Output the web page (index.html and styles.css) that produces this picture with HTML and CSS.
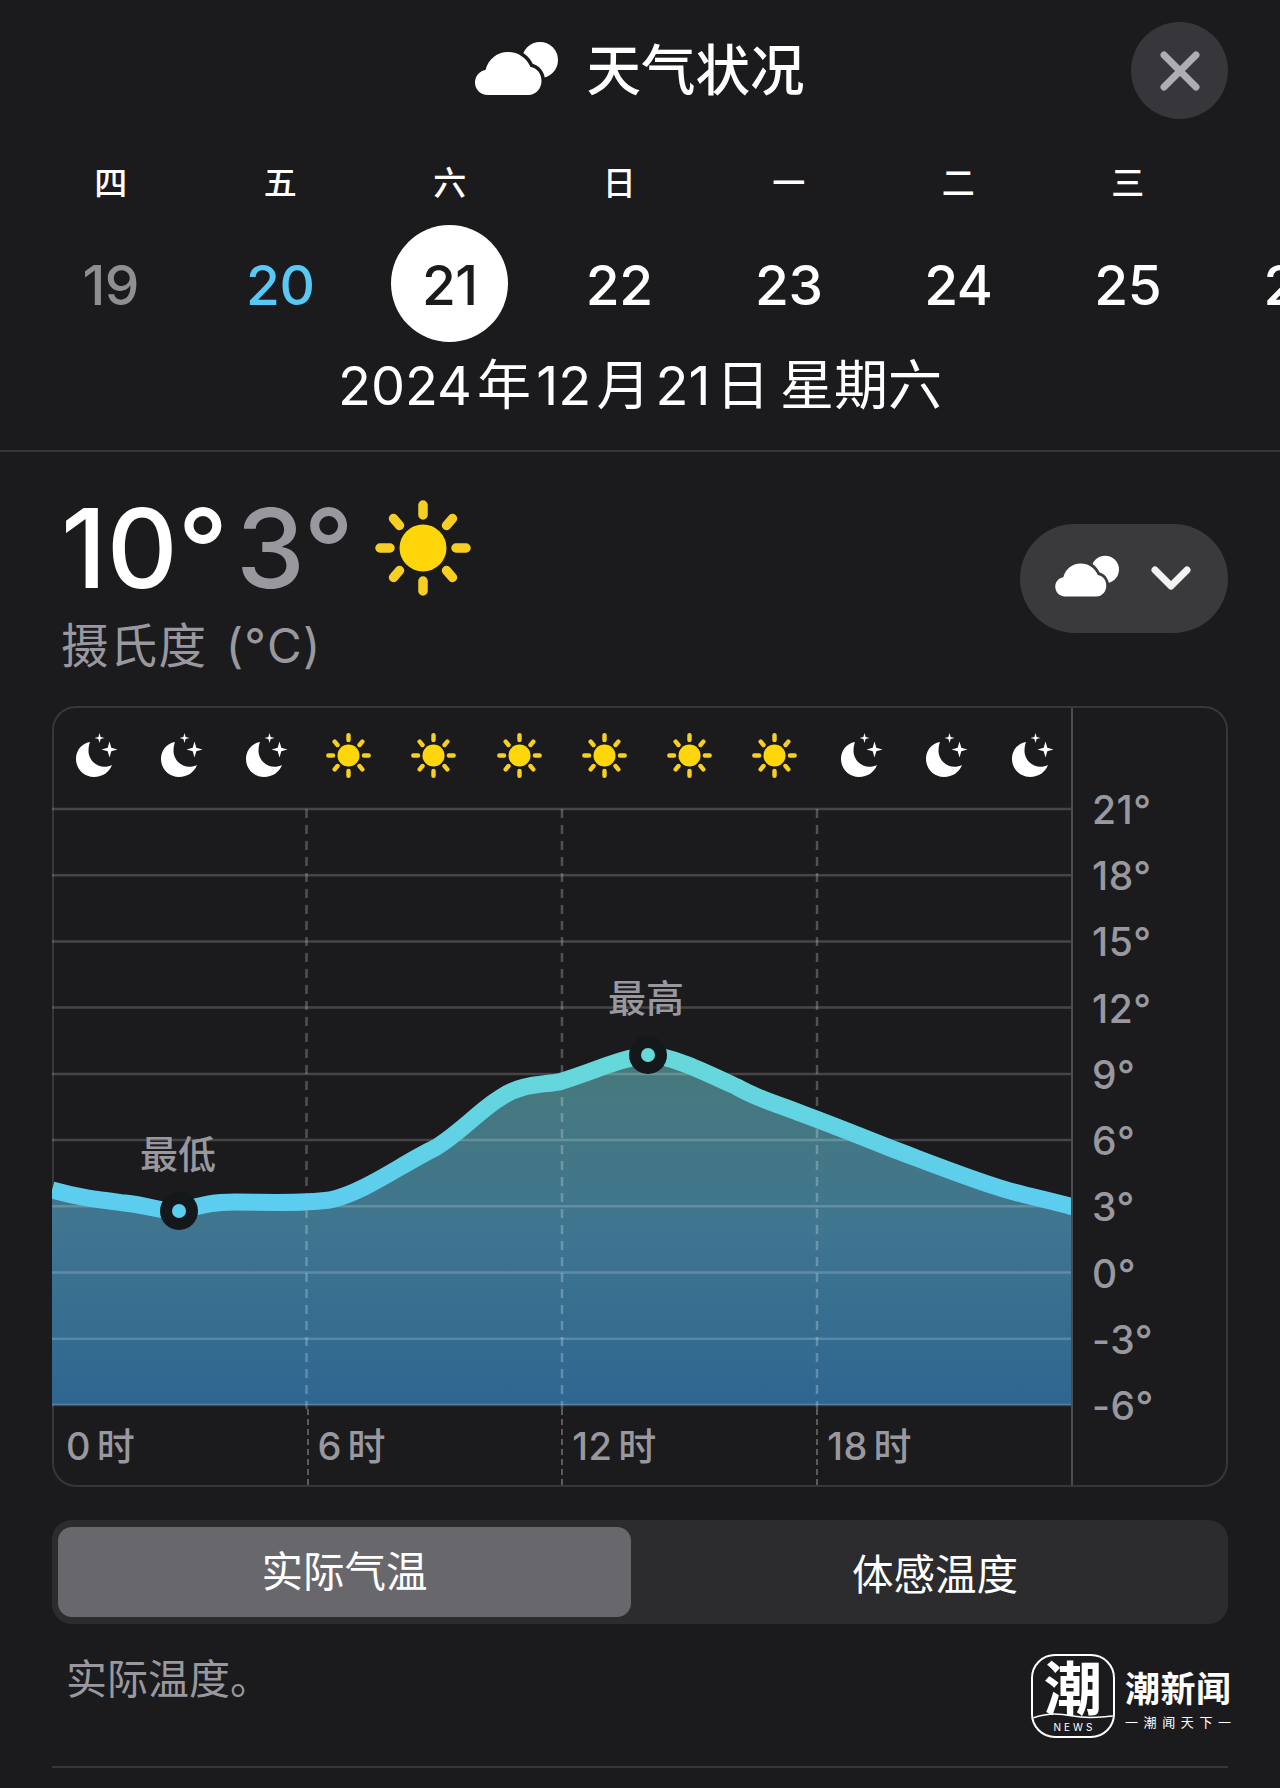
FILE: index.html
```html
<!DOCTYPE html>
<html lang="zh-CN">
<head>
<meta charset="utf-8">
<title>天气状况</title>
<link rel="stylesheet" href="styles.css">
</head>
<body>
<svg class="defs" aria-hidden="true">
  <defs>
    <mask id="cloud-gap" maskUnits="userSpaceOnUse" x="0" y="0" width="84" height="56">
      <rect width="84" height="56" fill="#fff"/>
      <path fill="#000" stroke="#000" stroke-width="7" d="M13 54C5 54 0 48 0 41.500c0-6.500 4.500-11.500 10.500-12.500C13.500 18 22 11 33 11c10.500 0 18.500 6 22.500 15 6.500 1 11 6.500 11 14 0 7.500-5.500 14-13 14Z"/>
    </mask>
    <symbol id="cloud" viewBox="0 0 84 56">
      <circle cx="65" cy="19" r="18" fill="currentColor" mask="url(#cloud-gap)"/>
      <path fill="currentColor" d="M13 54C5 54 0 48 0 41.500c0-6.500 4.500-11.500 10.500-12.500C13.500 18 22 11 33 11c10.500 0 18.500 6 22.500 15 6.500 1 11 6.500 11 14 0 7.500-5.500 14-13 14Z"/>
    </symbol>
    <symbol id="sun" viewBox="0 0 96 96">
      <circle cx="48" cy="48" r="23.500" fill="#ffd60a"/>
      <g stroke="#f7cf23" stroke-width="9.500" stroke-linecap="round">
        <path d="M48 5V15M48 81V91M5 48H15M81 48H91M18.500 18.500L24.500 25.500M71.500 70.500L77.500 77.500M77.500 18.500L71.500 25.500M24.500 70.500L18.500 77.500"/>
      </g>
    </symbol>
    <symbol id="moon" viewBox="0 0 42 44">
      <path fill="#fff" d="M14 9C5 10.500 0 18 0 26c0 10 8 18 18 18 8.500 0 15.500-5 18-12-2 1.200-5 1.800-7.500 1.800C19.500 33.800 12.500 26 12.500 18c0-3.500.5-6.500 1.500-9Z"/>
      <path fill="#fff" d="M33.500 8.500l1.800 6.200 6.200 1.800-6.200 1.800-1.800 6.200-1.800-6.200-6.200-1.800 6.200-1.800ZM23.500 0l1.100 3.900 3.900 1.100-3.900 1.100-1.100 3.900-1.100-3.900-3.900-1.100 3.900-1.100Z"/>
    </symbol>
  </defs>
</svg>

<header class="head">
  <div class="title-row">
    <span></span>
    <h1 class="title">
      <svg class="title-icon"><use href="#cloud"/></svg>
      <span>天气状况</span>
    </h1>
    <button class="close" aria-label="关闭">
      <svg class="close-icon" viewBox="0 0 40 40"><path d="M4 4L36 36M36 4L4 36"/></svg>
    </button>
  </div>
  <div class="week weekdays">
    <span>四</span><span>五</span><span>六</span><span>日</span><span>一</span><span>二</span><span>三</span>
  </div>
  <div class="week days">
    <span class="past">19</span>
    <span class="today">20</span>
    <span class="selected">21</span>
    <span>22</span><span>23</span><span>24</span><span>25</span><span>26</span>
  </div>
  <p class="date">2024 年 12 月 21 日&nbsp; 星期六</p>
</header>

<main class="main">
  <section class="summary">
    <div>
      <div class="temps">
        <span class="temp-high">10°</span>
        <span class="temp-low">3°</span>
        <svg class="temp-sun"><use href="#sun"/></svg>
      </div>
      <div class="unit">摄氏度 (°C)</div>
    </div>
    <button class="picker" aria-label="选择">
      <svg class="picker-cloud"><use href="#cloud"/></svg>
      <svg class="picker-chevron" viewBox="0 0 40 24"><path d="M4 4L20 20L36 4"/></svg>
    </button>
  </section>

  <section class="chart">
    <div class="plot">
      <div class="hour-icons">
        <svg class="moon"><use href="#moon"/></svg>
        <svg class="moon"><use href="#moon"/></svg>
        <svg class="moon"><use href="#moon"/></svg>
        <svg class="sun"><use href="#sun"/></svg>
        <svg class="sun"><use href="#sun"/></svg>
        <svg class="sun"><use href="#sun"/></svg>
        <svg class="sun"><use href="#sun"/></svg>
        <svg class="sun"><use href="#sun"/></svg>
        <svg class="sun"><use href="#sun"/></svg>
        <svg class="moon"><use href="#moon"/></svg>
        <svg class="moon"><use href="#moon"/></svg>
        <svg class="moon"><use href="#moon"/></svg>
      </div>
      <svg class="graph" viewBox="52 805 1019 604">
        <defs>
          <linearGradient id="area" gradientUnits="userSpaceOnUse" x1="0" y1="1060" x2="0" y2="1405">
            <stop offset="0" stop-color="#47797b"/>
            <stop offset="0.5" stop-color="#3f7590"/>
            <stop offset="1" stop-color="#2e6691"/>
          </linearGradient>
          <linearGradient id="stroke" gradientUnits="userSpaceOnUse" x1="0" y1="1055" x2="0" y2="1200">
            <stop offset="0" stop-color="#67d8d8"/>
            <stop offset="1" stop-color="#5ccdef"/>
          </linearGradient>
        </defs>
        <path class="area" d="M52 1190C80 1198 100 1200 125 1203C150 1206 165 1212 179 1211C195 1208 205 1202 235 1202C265 1202 300 1204 330 1200C365 1192 400 1165 435 1148C460 1133 480 1110 500 1098C520 1084 540 1085 559 1082C590 1073 620 1058 648 1055C670 1055 705 1072 737 1087C760 1100 775 1103 800 1113C830 1124 860 1136 890 1148C930 1163 960 1175 994 1186C1020 1195 1045 1199 1073 1207L1073 1405L52 1405Z"/>
        <g class="grid-lines">
          <path d="M52 809H1071M52 875.200H1071M52 941.400H1071M52 1007.600H1071M52 1073.900H1071M52 1140.100H1071M52 1206.300H1071M52 1272.500H1071M52 1338.800H1071M52 1405H1071"/>
        </g>
        <path class="dash-lines" d="M306.500 809V1409M562 809V1409M817 809V1409"/>
        <path class="curve" d="M52 1190C80 1198 100 1200 125 1203C150 1206 165 1212 179 1211C195 1208 205 1202 235 1202C265 1202 300 1204 330 1200C365 1192 400 1165 435 1148C460 1133 480 1110 500 1098C520 1084 540 1085 559 1082C590 1073 620 1058 648 1055C670 1055 705 1072 737 1087C760 1100 775 1103 800 1113C830 1124 860 1136 890 1148C930 1163 960 1175 994 1186C1020 1195 1045 1199 1073 1207"/>
        <circle class="ring" cx="179" cy="1211" r="19"/>
        <circle class="dot" cx="179" cy="1211" r="7"/>
        <circle class="ring" cx="648" cy="1055" r="19"/>
        <circle class="dot dot-high" cx="648" cy="1055" r="7"/>
        <text class="graph-label" x="178" y="1168">最低</text>
        <text class="graph-label" x="646" y="1012">最高</text>
      </svg>
      <div class="hours">
        <span>0 时</span><span>6 时</span><span>12 时</span><span>18 时</span>
      </div>
    </div>
    <div class="axis">
      <span>21°</span><span>18°</span><span>15°</span><span>12°</span><span>9°</span>
      <span>6°</span><span>3°</span><span>0°</span><span>-3°</span><span>-6°</span>
    </div>
  </section>

  <div class="segment">
    <span class="segment-on">实际气温</span>
    <span class="segment-off">体感温度</span>
  </div>

  <footer class="foot">
    <p class="foot-text">实际温度。</p>
    <div class="brand">
      <div class="brand-mark">
        <span class="brand-glyph">潮</span>
        <svg class="brand-wave" viewBox="0 0 80 6" preserveAspectRatio="none"><path d="M0 5C14 0 24 0 40 3C56 6 66 4 80 3"/></svg>
        <span class="brand-news">NEWS</span>
      </div>
      <div class="brand-text">
        <span class="brand-name">潮新闻</span>
        <span class="brand-slogan"><i>一</i><i>潮</i><i>闻</i><i>天</i><i>下</i><i>一</i></span>
      </div>
    </div>
  </footer>
</main>
</body>
</html>
```

FILE: styles.css
```css
* { box-sizing: border-box; }

html, body {
  margin: 0;
  padding: 0;
  background: #1b1b1e;
}

body {
  width: 1280px;
  height: 1788px;
  overflow: hidden;
  color: #fff;
  font-family: Inter, "Noto Sans CJK SC", sans-serif;
}

.defs { display: block; width: 0; height: 0; }

button {
  border: 0;
  padding: 0;
  color: inherit;
  font: inherit;
}

/* header */
.head {
  padding-top: 22px;
  height: 452px;
  border-bottom: 2px solid #37373a;
}

.title-row {
  display: grid;
  grid-template-columns: 1fr auto 1fr;
  align-items: center;
  height: 97px;
  padding: 0 52px;
}

.title {
  display: flex;
  align-items: center;
  gap: 27px;
  margin: 0;
  font-size: 54.500px;
  font-weight: 500;
  line-height: 97px;
}

.title-icon { width: 84px; height: 56px; color: #fff; margin-top: -4px; }

.close {
  justify-self: end;
  display: flex;
  align-items: center;
  justify-content: center;
  width: 97px;
  height: 97px;
  border-radius: 50%;
  background: #37373b;
}

.close-icon {
  width: 40px;
  height: 40px;
  fill: none;
  stroke: #aeaeb2;
  stroke-width: 7;
  stroke-linecap: round;
}

.week {
  display: grid;
  grid-template-columns: repeat(8, 169.5px);
  padding-left: 26px;
  text-align: center;
  white-space: nowrap;
}

.weekdays {
  margin-top: 44px;
  height: 40px;
  font-size: 33px;
  font-weight: 500;
  line-height: 40px;
}

.days {
  margin-top: 22px;
  height: 117px;
  font-size: 55px;
  font-weight: 500;
  line-height: 120px;
  letter-spacing: -0.5px;
}

.days span { display: block; }
.days .past { color: #8e8e93; }
.days .today { color: #5ac8f5; }
.days .selected {
  justify-self: center;
  width: 117px;
  height: 117px;
  border-radius: 50%;
  background: #fff;
  color: #1b1b1e;
}

.date {
  margin: 14px 0 0;
  font-size: 54px;
  line-height: 60px;
  text-align: center;
  word-spacing: -10px;
}

/* main */
.main { padding: 0 52px; }

.summary {
  display: flex;
  justify-content: space-between;
  align-items: flex-start;
  height: 254px;
  padding-left: 9px;
}

.temps {
  display: flex;
  align-items: center;
  height: 100px;
  margin-top: 46px;
  font-size: 110px;
  font-weight: 500;
  line-height: 100px;
}

.temp-high { color: #fff; }
.temp-low { color: #98989e; margin-left: 8px; }
.temp-sun { width: 96px; height: 96px; margin-left: 21px; }

.unit {
  margin-top: 20px;
  color: #98989e;
  font-size: 47.500px;
  line-height: 56px;
  word-spacing: 4px;
  letter-spacing: 1.200px;
}

.picker {
  display: flex;
  align-items: center;
  gap: 31px;
  width: 208px;
  height: 109px;
  margin-top: 72px;
  padding: 0 28px 0 35px;
  border-radius: 55px;
  background: #3a3a3d;
}

.picker-cloud { width: 65px; height: 43px; color: #fff; margin-top: -4px; }

.picker-chevron {
  width: 40px;
  height: 24px;
  margin-top: -2px;
  fill: none;
  stroke: #f2f2f2;
  stroke-width: 7;
  stroke-linecap: round;
  stroke-linejoin: round;
}

/* chart */
.chart {
  display: flex;
  height: 781px;
  border: 2px solid #37373a;
  border-radius: 24px;
}

.plot {
  width: 1019px;
  flex: none;
  border-right: 2px solid #4c4c4f;
}

.hour-icons {
  display: grid;
  grid-template-columns: repeat(12, 85.100px);
  justify-items: center;
  align-items: center;
  height: 97px;
}

.moon { width: 42px; height: 44px; margin-top: -4px; }
.sun { width: 45px; height: 45px; margin: -3px 6px 0 0; }

.graph {
  display: block;
  width: 1019px;
  height: 604px;
  margin-left: -2px;
}

.area { fill: url(#area); }
.grid-lines path { fill: none; stroke: rgba(255, 255, 255, 0.19); stroke-width: 2.500; }
.dash-lines { fill: none; stroke: rgba(255, 255, 255, 0.24); stroke-width: 2.500; stroke-dasharray: 9 7; }
.curve { fill: none; stroke: url(#stroke); stroke-width: 17; stroke-linejoin: round; }
.ring { fill: #14181b; }
.dot { fill: #5ccdef; }
.dot-high { fill: #67d8d8; }

.graph-label {
  fill: #98989e;
  font-size: 38px;
  font-weight: 500;
  text-anchor: middle;
}

.hours {
  display: grid;
  grid-template-columns: 252.500px repeat(3, 1fr);
  height: 76px;
  color: #98989e;
  font-size: 38px;
  font-weight: 500;
  line-height: 74px;
  word-spacing: -5px;
  letter-spacing: 0.5px;
}

.hours span {
  padding-left: 9px;
  border-left: 2.500px dashed #5b5b5e;
}

.hours span:first-child {
  padding-left: 12px;
  border-left: 0;
}

.axis {
  flex: 1;
  display: flex;
  flex-direction: column;
  padding: 69px 0 0 19px;
  color: #98989e;
  font-size: 39px;
  font-weight: 500;
  letter-spacing: 0.5px;
}

.axis span { height: 66.220px; line-height: 66.220px; }

/* segmented control */
.segment {
  display: grid;
  grid-template-columns: 573px 1fr;
  align-items: center;
  height: 104px;
  margin-top: 33px;
  padding: 7px 6px;
  border-radius: 20px;
  background: #2c2c2f;
  font-size: 41.500px;
  text-align: center;
}

.segment-on {
  height: 90px;
  border-radius: 14px;
  background: #68686c;
  line-height: 90px;
}

.segment-off { padding-left: 17px; }

/* footer */
.foot {
  display: flex;
  justify-content: space-between;
  align-items: flex-start;
  height: 144px;
  padding: 30px 0 0 14px;
  border-bottom: 2px solid #37373a;
}

.foot-text {
  margin: 0;
  color: #98989e;
  font-size: 41px;
  line-height: 50px;
}

.brand {
  display: flex;
  align-items: center;
  gap: 10px;
  margin-right: -3px;
}

.brand-mark {
  display: flex;
  flex-direction: column;
  align-items: center;
  width: 84px;
  height: 84px;
  border: 2.500px solid #fff;
  border-radius: 24px;
  overflow: hidden;
}

.brand-glyph {
  height: 60px;
  margin-top: 3px;
  font-size: 58px;
  font-weight: 700;
  line-height: 60px;
}

.brand-wave {
  display: block;
  width: 100%;
  height: 6px;
  margin-top: -6px;
  fill: none;
  stroke: #fff;
  stroke-width: 1.500;
}

.brand-news {
  margin-top: 2px;
  font-size: 10px;
  line-height: 12px;
  letter-spacing: 3px;
  padding-left: 3px;
}

.brand-text {
  display: flex;
  flex-direction: column;
  width: 106px;
  padding-top: 6px;
}

.brand-name {
  font-size: 35px;
  font-weight: 700;
  line-height: 42px;
  white-space: nowrap;
  letter-spacing: 0.500px;
}

.brand-slogan {
  display: flex;
  justify-content: space-between;
  margin-top: 3px;
  font-size: 13px;
  line-height: 18px;
}

.brand-slogan i { font-style: normal; }
```
